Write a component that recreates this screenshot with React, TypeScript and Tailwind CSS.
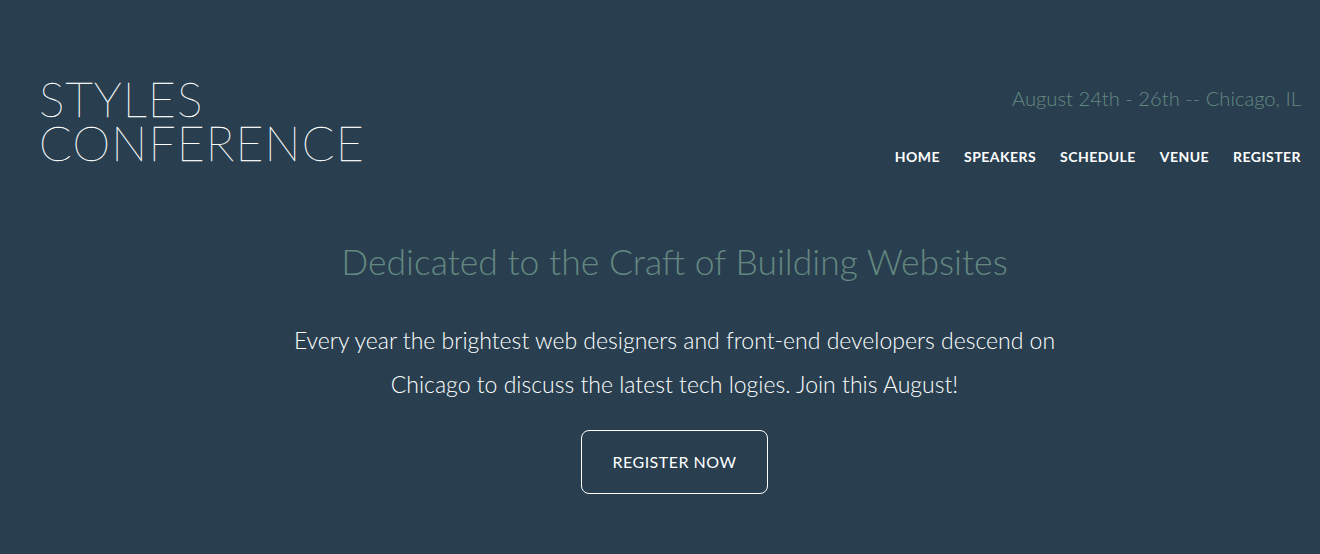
export default function App() {
  const nav = ["HOME", "SPEAKERS", "SCHEDULE", "VENUE", "REGISTER"];
  return (
    <div className="min-h-[554px] w-full bg-[#293f50] text-white font-['Lato','Liberation_Sans',sans-serif]">
      <header className="flex items-start justify-between pl-[39px] pr-[19px] pt-[77px]">
        <h1 className="text-[48px] leading-[44px] font-thin uppercase tracking-[1.2px] [-webkit-text-stroke:0.35px_white]">
          <span className="block">Styles</span>
          <span className="block">Conference</span>
        </h1>
        <div className="flex flex-col items-end -mt-[1px]">
          <p className="text-[20.2px] leading-[44px] font-light text-[#648880]">
            August 24th - 26th -- Chicago, IL
          </p>
          <nav className="mt-[26px] flex gap-[24px]">
            {nav.map((n) => (
              <a key={n} href="#" className="text-[14px] leading-[22px] font-bold tracking-[0.45px] text-white">
                {n}
              </a>
            ))}
          </nav>
        </div>
      </header>
      <section className="pl-[48px] pr-[19px] pt-[72px] text-center">
        <h2 className="text-[35.5px] leading-[44px] font-light text-[#648880]">
          Dedicated to the Craft of Building Websites
        </h2>
        <p className="mt-[34px] text-[23px] leading-[44px] font-light">
          <span className="block">Every year the brightest web designers and front-end developers descend on</span>
          <span className="block">Chicago to discuss the latest tech logies. Join this August!</span>
        </p>
        <a
          href="#"
          className="mt-[24px] inline-block rounded-[8px] border border-white px-[30px] py-[20px] text-[16px] leading-[22px] font-normal tracking-[0.5px] text-white"
        >
          REGISTER NOW
        </a>
      </section>
    </div>
  );
}
